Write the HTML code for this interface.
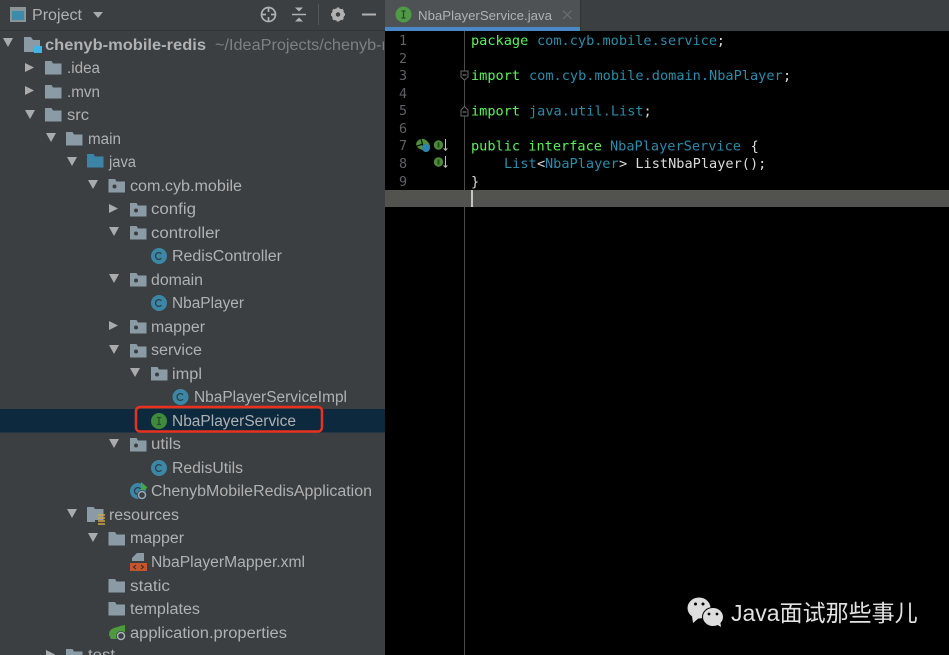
<!DOCTYPE html>
<html><head><meta charset="utf-8"><style>
html,body{margin:0;padding:0;background:#000;width:949px;height:655px;overflow:hidden}
svg{display:block}
#root{filter:blur(.35px)}
.t{font:15.5px "Liberation Sans",sans-serif;fill:#afb1b3}
.c{font:13.6px "DejaVu Sans Mono",monospace;white-space:pre}
.n{font:13.4px "DejaVu Sans Mono",monospace;fill:#5f6163}
.k{fill:#5cf25c}.p{fill:#2b8cab}.w{fill:#dcdcdc}
</style></head><body>
<svg id="root" width="949" height="655" viewBox="0 0 949 655" xmlns="http://www.w3.org/2000/svg">
<defs>
<path id="d" d="M0 0H10L5 9Z" fill="#a9abad"/>
<path id="r" d="M0 0L9 4.500L0 9Z" fill="#a9abad"/>
<path id="f" d="M0 1H6.500L8 3.500H16.500V14.500H0Z" fill="#8a9ba6"/>
<g id="pk"><path d="M0 1H6.500L8 3.500H16.500V14.500H0Z" fill="#8a9ba6"/><circle cx="6" cy="8.500" r="2" fill="#3c3f41"/></g>
<g id="cl"><circle cx="8" cy="8" r="8" fill="#3d87a6"/><path d="M10.500 5.800A3.400 3.400 0 1 0 10.500 10.200" fill="none" stroke="#2b3f4a" stroke-width="1.300"/></g>
<g id="ii"><circle cx="8" cy="8" r="8" fill="#3f8a3c"/><path d="M6 4.500H10M8 4.500V11.500M6 11.500H10" fill="none" stroke="#2c4a2b" stroke-width="1.300"/></g>
<g id="ig"><circle cx="5" cy="5" r="4.700" fill="#4a8a38"/><rect x="4" y="2.500" width="2" height="5" fill="#2d4a24"/><path d="M12 -1V9" stroke="#bdbdbd" stroke-width="1"/><path d="M9.500 8.500H14.500L12 11Z" fill="#bdbdbd"/></g>
</defs>

<rect width="949" height="655" fill="#000"/>
<rect width="385" height="655" fill="#3c3f41"/>
<rect x="0" y="30" width="385" height="1" fill="#323436"/>
<rect x="385" y="0" width="564" height="31" fill="#3c3f41"/>
<rect x="385" y="0" width="195" height="27" fill="#4e5254"/>
<rect x="385" y="27" width="195" height="4" fill="#4a88c7"/>
<rect x="580" y="0" width="1" height="31" fill="#333"/>

<!-- Project header -->
<rect x="10" y="7" width="16" height="15" fill="#8a9499"/>
<rect x="12" y="11" width="12" height="9" fill="#3b8cab"/>
<text x="32" y="20" class="t" textLength="50" lengthAdjust="spacingAndGlyphs">Project</text>
<path d="M93 12H103L98 18Z" fill="#a9abad"/>
<circle cx="268.500" cy="14.500" r="7" fill="none" stroke="#afb1b3" stroke-width="1.700"/>
<circle cx="268.500" cy="14.500" r="2.500" fill="#3c3f41"/>
<path d="M268.500 7V12M268.500 17V22M261 14.500H266M271 14.500H276" stroke="#afb1b3" stroke-width="1.700"/>
<path d="M292 14.500H306" stroke="#afb1b3" stroke-width="1.500"/>
<path d="M295 7.500H303L299 11.500ZM295 21.500H303L299 17.500Z" fill="#afb1b3"/>
<rect x="318" y="4" width="1" height="21" fill="#55585a"/>
<circle cx="338" cy="14.500" r="4.800" fill="none" stroke="#afb1b3" stroke-width="3"/>
<path d="M338 7.500V21.500M331 14.500H345M333 9.500L343 19.500M343 9.500L333 19.500" stroke="#afb1b3" stroke-width="2.400"/>
<circle cx="338" cy="14.500" r="2.200" fill="#3c3f41"/>
<rect x="362" y="13.500" width="14" height="2" fill="#afb1b3"/>

<!-- selection -->
<rect x="0" y="409" width="385" height="23.500" fill="#0d293e"/>

<!-- arrows -->
<use href="#d" x="3" y="38"/>
<use href="#r" x="25" y="63"/>
<use href="#r" x="25" y="86"/>
<use href="#d" x="25" y="110"/>
<use href="#d" x="46" y="133"/>
<use href="#d" x="67" y="157"/>
<use href="#d" x="88" y="180"/>
<use href="#r" x="109" y="204"/>
<use href="#d" x="109" y="227"/>
<use href="#d" x="109" y="274"/>
<use href="#r" x="109" y="321"/>
<use href="#d" x="109" y="345"/>
<use href="#d" x="130" y="368"/>
<use href="#d" x="109" y="439"/>
<use href="#d" x="67" y="509"/>
<use href="#d" x="88" y="533"/>
<use href="#r" x="46" y="650"/>

<!-- tree icons -->
<path d="M24 37H31L33 40H40V52H24Z" fill="#8a9ba6"/>
<rect x="34" y="46" width="8" height="7" fill="#3fb4ea"/>
<use href="#f" x="45" y="60"/>
<use href="#f" x="45" y="84"/>
<use href="#f" x="45" y="107"/>
<use href="#f" x="66" y="131"/>
<path d="M87 154H93.500L95 156.500H103.500V167.500H87Z" fill="#3b86a8"/>
<use href="#pk" x="108.500" y="178"/>
<use href="#pk" x="130" y="202"/>
<use href="#pk" x="130" y="225"/>
<use href="#cl" x="151" y="248"/>
<use href="#pk" x="130" y="272"/>
<use href="#cl" x="151" y="295"/>
<use href="#pk" x="130" y="319"/>
<use href="#pk" x="130" y="343"/>
<use href="#pk" x="151" y="366"/>
<use href="#cl" x="172.500" y="389"/>
<use href="#ii" x="151" y="413"/>
<use href="#pk" x="130" y="437"/>
<use href="#cl" x="151" y="460"/>
<use href="#cl" x="130" y="483"/>
<path d="M141 482V493L147.500 487.500Z" fill="#45a845"/>
<circle cx="142" cy="495" r="5" fill="#3c3f41"/>
<circle cx="142" cy="495" r="3.500" fill="none" stroke="#9ab" stroke-width="1.500"/>
<path d="M87 507H93.500L95 509H103.500V520H95V522H87Z" fill="#8a9ba6"/>
<path d="M98 515H105M98 518H105M98 521H105M98 524H105" stroke="#d6a53a" stroke-width="1.500"/>
<use href="#f" x="108.500" y="531"/>
<path d="M137 553L132 558V561H144V553Z" fill="#8a9ba6"/>
<rect x="130" y="563" width="17" height="8" fill="#c4562a"/>
<path d="M136 565L133.500 567L136 569M141 565L143.500 567L141 569" fill="none" stroke="#2b2b2b" stroke-width="1"/>
<use href="#f" x="108.500" y="578"/>
<use href="#f" x="108.500" y="601"/>
<path d="M109 635C109 627 117 628 120 626L125 625V632L118 639H111Z" fill="#4f9a3f"/>
<circle cx="121" cy="636" r="5" fill="#3c3f41"/>
<circle cx="121" cy="636" r="3.500" fill="none" stroke="#a9b4ba" stroke-width="1.500"/>
<use href="#f" x="66" y="648"/>

<!-- tree labels -->
<text x="45" y="50" class="t" style="font-weight:bold" textLength="161" lengthAdjust="spacingAndGlyphs">chenyb-mobile-redis</text>
<svg x="0" y="30" width="384" height="40"><text x="215" y="20" class="t" style="fill:#7d8082" textLength="172" lengthAdjust="spacingAndGlyphs">~/IdeaProjects/chenyb-r</text></svg>
<text x="67" y="73" class="t" textLength="33" lengthAdjust="spacingAndGlyphs">.idea</text>
<text x="67" y="97" class="t" textLength="33" lengthAdjust="spacingAndGlyphs">.mvn</text>
<text x="67" y="120" class="t" textLength="22" lengthAdjust="spacingAndGlyphs">src</text>
<text x="88" y="144" class="t" textLength="33" lengthAdjust="spacingAndGlyphs">main</text>
<text x="109" y="167" class="t" textLength="27" lengthAdjust="spacingAndGlyphs">java</text>
<text x="130" y="191" class="t" textLength="112" lengthAdjust="spacingAndGlyphs">com.cyb.mobile</text>
<text x="151" y="214" class="t" textLength="45" lengthAdjust="spacingAndGlyphs">config</text>
<text x="151" y="238" class="t" textLength="69" lengthAdjust="spacingAndGlyphs">controller</text>
<text x="172" y="261" class="t" textLength="110" lengthAdjust="spacingAndGlyphs">RedisController</text>
<text x="151" y="285" class="t" textLength="52" lengthAdjust="spacingAndGlyphs">domain</text>
<text x="172" y="308" class="t" textLength="72" lengthAdjust="spacingAndGlyphs">NbaPlayer</text>
<text x="151" y="332" class="t" textLength="54" lengthAdjust="spacingAndGlyphs">mapper</text>
<text x="151" y="355" class="t" textLength="51" lengthAdjust="spacingAndGlyphs">service</text>
<text x="172" y="379" class="t" textLength="30" lengthAdjust="spacingAndGlyphs">impl</text>
<text x="194" y="402" class="t" textLength="153" lengthAdjust="spacingAndGlyphs">NbaPlayerServiceImpl</text>
<text x="172" y="426" class="t" textLength="124" lengthAdjust="spacingAndGlyphs">NbaPlayerService</text>
<text x="151" y="449" class="t" textLength="30" lengthAdjust="spacingAndGlyphs">utils</text>
<text x="172" y="473" class="t" textLength="71" lengthAdjust="spacingAndGlyphs">RedisUtils</text>
<text x="151" y="496" class="t" textLength="221" lengthAdjust="spacingAndGlyphs">ChenybMobileRedisApplication</text>
<text x="109" y="520" class="t" textLength="70" lengthAdjust="spacingAndGlyphs">resources</text>
<text x="130" y="543" class="t" textLength="54" lengthAdjust="spacingAndGlyphs">mapper</text>
<text x="151" y="567" class="t" textLength="154" lengthAdjust="spacingAndGlyphs">NbaPlayerMapper.xml</text>
<text x="130" y="591" class="t" textLength="40" lengthAdjust="spacingAndGlyphs">static</text>
<text x="130" y="614" class="t" textLength="70" lengthAdjust="spacingAndGlyphs">templates</text>
<text x="130" y="638" class="t" textLength="157" lengthAdjust="spacingAndGlyphs">application.properties</text>
<text x="88" y="660" class="t" textLength="27" lengthAdjust="spacingAndGlyphs">test</text>

<rect x="136" y="407" width="186" height="24.500" rx="4" fill="none" stroke="#e8321f" stroke-width="2.500"/>

<!-- tab -->
<circle cx="403.500" cy="14.500" r="8" fill="#4f9a45"/>
<path d="M401.500 11H405.500M403.500 11V18M401.500 18H405.500" fill="none" stroke="#2c4a2b" stroke-width="1.300"/>
<text x="418" y="20" class="t" style="font-size:13.300px" textLength="134" lengthAdjust="spacingAndGlyphs">NbaPlayerService.java</text>
<path d="M563 10.500L571.500 19M571.500 10.500L563 19" stroke="#6e7173" stroke-width="1"/>

<!-- editor -->
<rect x="464" y="31" width="1" height="624" fill="#4a4a4a"/>
<rect x="385" y="190" width="564" height="17" fill="#52534e"/>
<rect x="471" y="190" width="2" height="17" fill="#c4c4c4"/>

<text x="399" y="45" class="n">1</text>
<text x="399" y="63" class="n">2</text>
<text x="399" y="80" class="n">3</text>
<text x="399" y="98" class="n">4</text>
<text x="399" y="115" class="n">5</text>
<text x="399" y="133" class="n">6</text>
<text x="399" y="150" class="n">7</text>
<text x="399" y="168" class="n">8</text>
<text x="399" y="186" class="n">9</text>

<path d="M461 71H468V77L464.500 80L461 77Z" fill="#000" stroke="#6a6a6a"/>
<path d="M462.500 75H466.500" stroke="#8a8a8a"/>
<path d="M461 116H468V110L464.500 106.500L461 110Z" fill="#000" stroke="#6a6a6a"/>
<path d="M462.500 112H466.500" stroke="#8a8a8a"/>

<path d="M416 144C417 140 421 138 424 139C428 141 430 144 430 147L424 150C420 150 417 148 416 144Z" fill="#4f8f3c"/>
<path d="M421 139L423 146M417 146L423 144" stroke="#000" stroke-width="1"/>
<circle cx="426" cy="148" r="4" fill="#2f86ac"/>
<use href="#ig" x="433.500" y="140"/>
<use href="#ig" x="433.500" y="157"/>

<text class="c" y="45"><tspan x="471" class="k">package</tspan><tspan x="537" class="p">com.cyb.mobile.service</tspan><tspan x="716.700" class="w">;</tspan></text>
<text class="c" y="80"><tspan x="471" class="k">import</tspan><tspan x="529" class="p">com.cyb.mobile.domain.NbaPlayer</tspan><tspan x="783" class="w">;</tspan></text>
<text class="c" y="115.500"><tspan x="471" class="k">import</tspan><tspan x="529" class="p">java.util.List</tspan><tspan x="643.500" class="w">;</tspan></text>
<text class="c" y="150.500"><tspan x="471" class="k">public interface</tspan><tspan x="610" class="p">NbaPlayerService</tspan><tspan x="750.500" class="w">{</tspan></text>
<text class="c" y="168"><tspan x="504" class="p">List</tspan><tspan x="537" class="w">&lt;</tspan><tspan x="545" class="p">NbaPlayer</tspan><tspan x="619" class="w">&gt; ListNbaPlayer();</tspan></text>
<text class="c" y="186"><tspan x="471" class="w">}</tspan></text>

<!-- watermark -->
<ellipse cx="699" cy="608" rx="11.500" ry="10.500" fill="#dedede"/>
<path d="M692 616L693 623L699 618Z" fill="#dedede"/>
<ellipse cx="713" cy="617" rx="11" ry="10" fill="#000"/>
<ellipse cx="713" cy="617" rx="10" ry="9" fill="#dedede"/>
<path d="M716 624L721 627L720 620Z" fill="#dedede"/>
<circle cx="695.500" cy="604" r="1.500" fill="#000"/><circle cx="703" cy="604" r="1.500" fill="#000"/>
<circle cx="709" cy="614" r="1.400" fill="#000"/><circle cx="717" cy="614" r="1.400" fill="#000"/>
<text x="731" y="621" style="font:23px 'Liberation Sans','Noto Sans CJK SC',sans-serif;fill:#e2e2e2">Java面试那些事儿</text>
</svg>
</body></html>
